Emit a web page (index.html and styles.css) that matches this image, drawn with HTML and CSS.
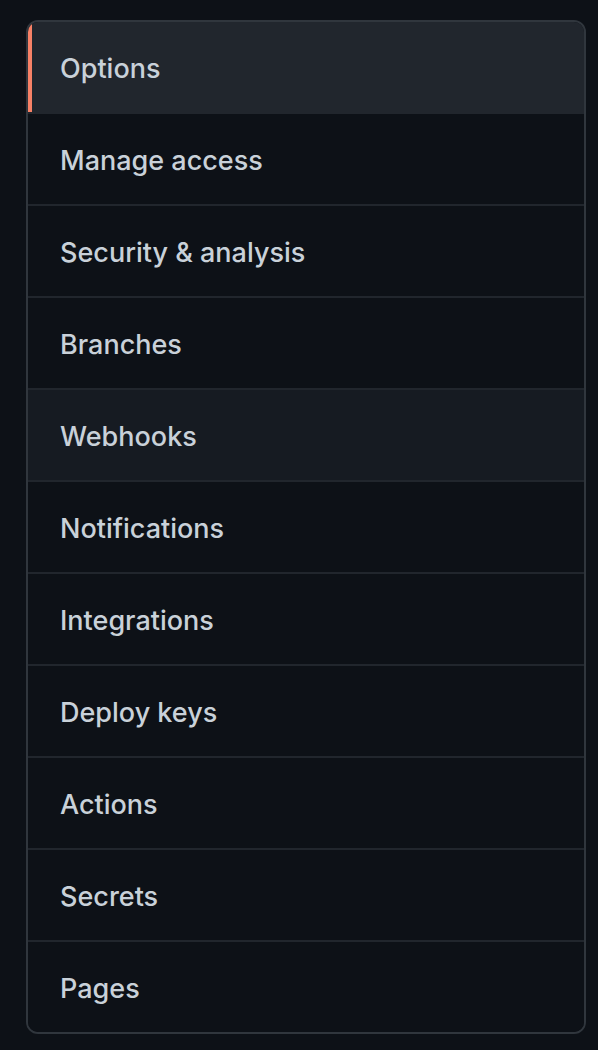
FILE: index.html
```html
<!DOCTYPE html>
<html lang="en">
<head>
<meta charset="utf-8">
<link rel="stylesheet" href="styles.css">
</head>
<body>
<nav class="menu">
  <a class="menu-item selected" href="#">Options</a>
  <a class="menu-item" href="#">Manage access</a>
  <a class="menu-item" href="#">Security &amp; analysis</a>
  <a class="menu-item" href="#">Branches</a>
  <a class="menu-item hover" href="#">Webhooks</a>
  <a class="menu-item" href="#">Notifications</a>
  <a class="menu-item" href="#">Integrations</a>
  <a class="menu-item" href="#">Deploy keys</a>
  <a class="menu-item" href="#">Actions</a>
  <a class="menu-item" href="#">Secrets</a>
  <a class="menu-item last" href="#">Pages</a>
</nav>
</body>
</html>
```
FILE: styles.css
```css
html, body {
  margin: 0;
  padding: 0;
  background: #0d1117;
}
body {
  padding: 20px 12px 0 26px;
  font-family: Inter, "Noto Sans", "Liberation Sans", sans-serif;
}
.menu {
  width: 556px;
  border: 2px solid #30363d;
  border-radius: 12px;
  overflow: hidden;
  display: flex;
  flex-direction: column;
}
.menu-item {
  display: flex;
  align-items: center;
  box-sizing: border-box;
  height: 92px;
  padding-left: 32px;
  padding-top: 2px;
  border-bottom: 2px solid #21262d;
  color: #c9d1d9;
  font-size: 27px;
  font-weight: 500;
  text-decoration: none;
  background: #0d1117;
  position: relative;
}
.menu-item.last {
  border-bottom: none;
  height: 90px;
}
.menu-item.selected {
  background: #21262d;
  border-bottom-color: #21262d;
}
.menu-item.selected::before {
  content: "";
  position: absolute;
  left: 0;
  top: 0;
  bottom: 0;
  width: 4px;
  background: #f78166;
}
.menu-item.hover {
  background: #161b22;
}
```
